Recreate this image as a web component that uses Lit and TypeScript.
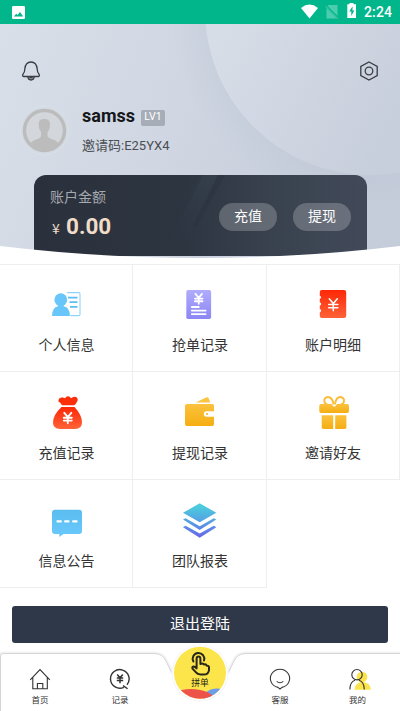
import { LitElement, html, svg, css } from "lit";
import { customElement } from "lit/decorators.js";

const yen = (x: number, y: number, s: number, w: number) => svg`
  <g transform="translate(${x} ${y}) scale(${s})" fill="none" stroke="#fff" stroke-width=${w / s} stroke-linecap="round">
    <path d="M-3.5-5 0-.8 3.5-5M0-.8V5.5M-4 0H4M-4 2.8H4" />
  </g>`;

const MENU = [
  {
    label: "个人信息",
    icon: svg`
      <path d="M18 6.6H29.5Q31 6.6 31 8V28.4Q31 29.6 29.5 29.6H21.5" fill="none" stroke="#8fd3f6" stroke-width="1.1"/>
      <path d="M19 11.7H28.5M20.5 16.2H28.5M21 20.8H28.5" stroke="#5cbdf0" stroke-width="1.7"/>
      <circle cx="11.8" cy="13.7" r="6.4" fill="#69c6fa"/>
      <path d="M3 30Q3 21.5 9 20.2L9 18H14.7V20.2Q21 21.5 21 30Z" fill="#69c6fa"/>`,
  },
  {
    label: "抢单记录",
    icon: svg`
      <rect x="4.3" y="4" width="24.8" height="29" rx="1.8" fill="url(#violet)"/>
      ${yen(16.7, 12.6, 0.95, 1.8)}
      <path d="M9.8 21H16.8M9.8 24.6H23.6M9.8 28.1H23.6" stroke="#fff" stroke-width="1.8" stroke-linecap="round"/>`,
  },
  {
    label: "账户明细",
    icon: svg`
      <path d="M7 4H29Q31.2 4 31.2 6.2V29.8Q31.2 32 29 32H7Q4.8 32 4.8 30V26.4Q6.2 25.6 6.2 24.7T4.8 23V19.8Q6.2 19 6.2 18T4.8 16.2V13Q6.2 12 6.2 11.2T4.8 9.7V6.2Q4.8 4 7 4Z" fill="url(#red)"/>
      ${yen(18.3, 18.5, 1.15, 1.5)}`,
  },
  {
    label: "充值记录",
    icon: svg`
      <path d="M13 11.2Q11.8 8.8 9.4 7.6Q9.2 4.2 12.4 3.6Q14.8 3.2 16 4.2Q17 2.3 19 2.3T22 4.2Q24.4 2 27 3Q29.4 4.4 28.5 6.8Q27 10.7 25 11.2Z" fill="#fd2f0b"/>
      <path d="M12.5 13H25.5Q33 21 33 28.5Q33 35 26 35H11Q4 35 4 28.5Q4 21 12.5 13Z" fill="url(#red)"/>
      ${yen(18.8, 23.8, 1, 1.9)}`,
  },
  {
    label: "提现记录",
    icon: svg`
      <path d="M13.7 8.6 24.6 3.3Q26 2.8 26.6 4L28.2 8.6Z" fill="#fbc540"/>
      <path d="M5 10H30.5Q32 10 32 11.8V17.3H24.5Q21.8 17.5 21.8 20T24.5 22.7H32V30.2Q32 32 30.2 32H5Q3 32 3 30.2V11.8Q3 10 5 10Z" fill="url(#gold)"/>
      <circle cx="25" cy="20" r="1.1" fill="#f9b826"/>`,
  },
  {
    label: "邀请好友",
    icon: svg`
      <g fill="none" stroke="#fabd35" stroke-width="1.9">
        <path d="M18.4 10.5Q17.5 2.8 12.6 3Q9 3.7 9.3 7.2Q9.5 10 12.5 10.5"/>
        <path d="M20 10.5Q20.9 2.8 25.6 3Q29.3 3.7 29 7.2Q28.8 10 26 10.5"/>
      </g>
      <path d="M6 10H16.5L18.4 12.5H20L22 10H32.3Q34 10 34 11.8V17Q34 19 32.3 19H6Q4.3 19 4.3 17V11.8Q4.3 10 6 10Z" fill="url(#gold)"/>
      <path d="M6.7 21.2H18.2V35H8.5Q6.7 35 6.7 33.2ZM20.2 21.2H31.4V33.2Q31.4 35 29.6 35H20.2Z" fill="url(#gold)"/>`,
  },
  {
    label: "信息公告",
    icon: svg`
      <path d="M6 7.8H30Q33 7.8 33 10.8V29Q33 32 30 32H14.5L10.3 35V32H6Q3 32 3 29V10.8Q3 7.8 6 7.8Z" fill="url(#sky)"/>
      <path d="M8.5 19.4H11.8M16.2 19.4H19.4M24.2 19.4H27.5" stroke="#fff" stroke-width="2.3" stroke-linecap="round"/>`,
  },
  {
    label: "团队报表",
    icon: svg`
      <g fill="url(#stack)">
        <path d="M17.7 1.3 34.3 10.8 17.7 20.3 1 10.8Z"/>
        <path d="M1 17.6 3.6 16.2 17.7 24.2 31.8 16.2 34.3 17.6 17.7 28Z"/>
        <path d="M1 25.2 3.6 23.8 17.7 31.6 31.8 23.8 34.3 25.2 17.7 35.7Z"/>
      </g>`,
  },
];

const TABS = [
  {
    label: "首页",
    cls: "",
    icon: svg`<path d="M1.2 11.8 11 1.6 20.8 11.8M3.8 9.5V20.8H18.3V9.5M8.4 20.8V15.5H13.8V20.8"/>`,
  },
  {
    label: "记录",
    cls: "",
    icon: svg`
      <path d="M14.8 19.3A9.3 9.3 0 1 1 18 16.8M14 17.6 18.6 20.8" stroke-width="1.4"/>
      <path d="M8.2 6.4 11 9.8 13.8 6.4M11 9.8V15.2M7.8 10.1H14.2M7.8 12.5H14.2" stroke-width="1.5"/>`,
  },
  {
    label: "客服",
    cls: "after-notch",
    icon: svg`
      <path d="M9 19.4A9.6 9.2 0 1 1 13 19.4L11 21Z"/>
      <path d="M7.7 13.4Q11 16 14.3 13.4"/>`,
  },
  {
    label: "我的",
    cls: "mine",
    icon: svg`
      <g fill="#fbe34d" stroke="none"><circle cx="13" cy="9" r="5.3"/><path d="M5.5 21.8Q6 14.5 13 14Q21.5 14 21.9 21.8Z"/></g>
      <circle cx="8" cy="6.7" r="5.2"/>
      <path d="M.9 21.4Q1 13.5 6 12.2M10 12.2Q15 13.5 15.3 21.4"/>`,
  },
];

@customElement("app-root")
export class AppRoot extends LitElement {
  static styles = css`
    :host {
      display: block;
      width: 400px;
      height: 711px;
      overflow: hidden;
      background: #fff;
      color: #333;
      font-family: Roboto, "Noto Sans CJK SC", sans-serif;
    }
    .page { display: flex; flex-direction: column; height: 711px; }
    .status {
      height: 24px; flex: none; background: #00b68a; color: #fff;
      display: flex; align-items: center; padding: 0 8px 0 12px; box-sizing: border-box;
      font-size: 14px; font-weight: 500;
    }
    .status .photo { margin-right: auto; }
    .status span { margin-left: 7px; letter-spacing: 0.1px; }
    .hero { position: relative; height: 240px; flex: none; }
    .backdrop, .curve { position: absolute; inset: 0; }
    .content { position: relative; display: flex; flex-direction: column; height: 232px; overflow: hidden; }
    .actions { display: flex; justify-content: space-between; padding: 36px 21px 0; }
    .profile { display: flex; align-items: flex-start; padding: 20px 0 0 20px; height: 93px; box-sizing: border-box; flex: none; }
    .who { margin-left: 13px; padding-top: 3px; }
    .name { display: flex; align-items: center; height: 20px; font-size: 18px; font-weight: 700; color: #15171b; }
    .level {
      margin: 5px 0 0 6px; width: 24px; height: 16px; border-radius: 2px; background: #a7adb7;
      color: #fff; font-size: 10.5px; font-weight: 400; line-height: 14px; text-align: center;
    }
    .code { margin-top: 11px; font-size: 13px; line-height: 20px; color: #4a4d53; }
    .account {
      position: relative; width: 333px; height: 81px; margin: 0 0 0 34px; flex: none;
      border-radius: 12px 12px 0 0; overflow: hidden;
    }
    .sheen { position: absolute; inset: 0; }
    .row { position: relative; display: flex; align-items: flex-start; padding: 12px 16px 0; }
    .sum { flex: 1; }
    .caption { font-size: 14px; line-height: 20px; color: #a5a8ad; }
    .amount { display: flex; align-items: baseline; margin-top: 6px; color: #f1dcc8; line-height: 26px; font-size: 22.5px; font-weight: 700; }
    .amount i { font: 400 14px/14px "Noto Sans CJK SC", sans-serif; width: 14px; padding-left: 2px; }
    .pill {
      width: 58px; height: 28px; border-radius: 14px; background: rgba(255, 255, 255, 0.22);
      color: #fff; font-size: 14px; line-height: 27px; text-align: center; margin: 16px 0 0 16px;
    }
    .menu {
      display: grid; grid-template-columns: 133px 134px 133px; grid-template-rows: 107px 108px 108px;
      border-top: 1px solid #eee; flex: none;
    }
    .cell {
      display: flex; flex-direction: column; align-items: center; justify-content: flex-end;
      box-sizing: border-box; border-right: 1px solid #eee; border-bottom: 1px solid #eee;
      padding: 0 0 15px 1px; font-size: 14px; line-height: 22px; color: #333;
    }
    .cell:nth-child(3n) { padding-left: 0; }
    .cell svg { margin: 0 0 12px; display: block; }
    .logout {
      flex: none; margin: 18px 12px 0; height: 37px; border-radius: 3px; background: #2f3848;
      color: #fff; font-size: 15px; line-height: 36px; text-align: center;
    }
    .tabs { position: relative; margin-top: auto; height: 66px; flex: none; display: grid; grid-template-columns: repeat(5, 80px); }
    .shell { position: absolute; left: 0; top: 0; }
    .tab {
      position: relative; display: flex; flex-direction: column; align-items: center; padding-top: 23px;
      font-size: 8.5px; line-height: 12px; color: #333;
    }
    .tab svg { fill: none; stroke: #333; stroke-width: 1.1; margin-bottom: 4px; }
    .after-notch { grid-column: 4; }
    .mine span { margin-right: 5px; }
    .join {
      position: absolute; left: 171px; top: -1px; width: 58px; height: 58px;
      font-size: 8.8px; font-weight: 400; color: #29261c; text-align: center;
    }
    .join svg { position: absolute; inset: 0; }
    .join span { position: relative; display: block; margin-top: 33px; line-height: 12px; }
    .defs { position: absolute; width: 0; height: 0; }
  `;

  render() {
    return html`
      <div class="page">
        <div class="status">
          <svg class="photo" width="13" height="13" viewBox="0 0 13 13">
            <rect width="13" height="13" rx="1.2" fill="#fff"/>
            <path d="M1.8 10.4 4.3 7.8 5.5 9 8 6 11.2 10.4Z" fill="#00b68a"/>
          </svg>
          <svg width="56" height="18" viewBox="0 0 56 18">
            <path d="M0 5Q8.5-1.8 17 5L8.5 15.5Z" fill="#fff"/>
            <path d="M27.5 2H36.5V15.5H25.5V4.5Z" fill="#4ccdaf"/>
            <path d="M24.5 2.5 37.5 15.5" stroke="#00b68a" stroke-width="2.4"/>
            <path d="M24.5 3 37 15.7" stroke="#4ccdaf" stroke-width="1"/>
            <path d="M46.3 1.3H48.5V0H52.5V1.3H55V15H46.3Z" fill="#fff"/>
            <path d="M51.6 3.2 48.3 8.6H50.3V13L53.4 7.5H51.4Z" fill="#00b68a"/>
          </svg>
          <span>2:24</span>
        </div>

        <div class="hero">
          <svg class="backdrop" width="400" height="240" viewBox="0 24 400 240">
            <defs>
              <linearGradient id="bg" x1="0" y1="0" x2="1" y2=".25">
                <stop offset="0" stop-color="#d8dfe9"/><stop offset=".5" stop-color="#d0d7e2"/><stop offset="1" stop-color="#c5ccda"/>
              </linearGradient>
              <linearGradient id="disc" gradientUnits="userSpaceOnUse" x1="210" y1="60" x2="380" y2="150">
                <stop offset="0" stop-color="#d6dde7"/><stop offset="1" stop-color="#c8cfdc"/>
              </linearGradient>
              <radialGradient id="halo" gradientUnits="userSpaceOnUse" cx="370" cy="10" r="200">
                <stop offset=".82" stop-color="#bcc5d5" stop-opacity=".35"/><stop offset="1" stop-color="#bcc5d5" stop-opacity="0"/>
              </radialGradient>
            </defs>
            <rect y="24" width="400" height="240" fill="url(#bg)"/>
            <circle cx="370" cy="10" r="200" fill="url(#halo)"/>
            <circle cx="370" cy="10" r="165" fill="url(#disc)"/>
          </svg>
          <div class="content">
            <div class="actions">
              <svg width="20" height="22" viewBox="0 0 20 22" fill="none" stroke="#3b3d42" stroke-width="1.3">
                <path d="M2.7 16.5H17.3Q19.2 16 17.8 13.8Q16.3 12.5 16.2 9Q15.5 2 10 2T3.8 9Q3.7 12.5 2.2 13.8Q.8 16 2.7 16.5ZM6.8 17Q7.2 20 10 20T13.2 17M8.3 17.8H11.7"/>
              </svg>
              <svg width="20" height="22" viewBox="0 0 20 22" fill="none" stroke="#3b3d42" stroke-width="1.3">
                <path d="M10 2 18.2 6.5V15.5L10 20 1.8 15.5V6.5Z"/><circle cx="10" cy="11" r="3.8"/>
              </svg>
            </div>
            <div class="profile">
              <svg width="49" height="58" viewBox="0 0 49 58">
                <circle cx="24.5" cy="28.5" r="24" fill="#d3d9e1" stroke="#dde2e9" stroke-width=".7"/>
                <circle cx="24.5" cy="28.5" r="20" fill="#d3d7dc" stroke="#bcbcbd" stroke-width="3.4"/>
                <path d="M18.7 22Q18.5 17 24.3 17T30 22Q30 27.5 27.6 29.8V34Q28 36 32 37.2Q37 38.6 38.5 41.5Q33 49 24.5 49T10.2 41.5Q12 38.6 17 37.2Q20.8 36 21.1 34V29.8Q18.8 27.5 18.7 22Z" fill="#bcbcbd"/>
              </svg>
              <div class="who">
                <div class="name">samss<div class="level">LV1</div></div>
                <div class="code">邀请码:E25YX4</div>
              </div>
            </div>
            <div class="account">
              <svg class="sheen" width="333" height="81" viewBox="0 0 333 81">
                <defs>
                  <linearGradient id="card"><stop offset="0" stop-color="#2a313d"/><stop offset=".45" stop-color="#2d3541"/><stop offset=".7" stop-color="#38414d"/><stop offset="1" stop-color="#424a5a"/></linearGradient>
                  <linearGradient id="fade" x2="0" y2="1"><stop offset="0" stop-color="#3b4655"/><stop offset="1" stop-color="#303946" stop-opacity="0"/></linearGradient>
                </defs>
                <rect width="333" height="81" fill="url(#card)"/>
                <path d="M169 0H184L151 72 133 72Z" fill="url(#fade)" opacity=".4"/>
                <path d="M184 0H191L162 52 158 52Z" fill="#2b323f" opacity=".5"/>
              </svg>
              <div class="row">
                <div class="sum">
                  <div class="caption">账户金额</div>
                  <div class="amount"><i>¥</i>0.00</div>
                </div>
                <div class="pill">充值</div>
                <div class="pill">提现</div>
              </div>
            </div>
          </div>
          <svg class="curve" width="400" height="240" viewBox="0 24 400 240">
            <path d="M0 246Q200 270 400 246V264H0Z" fill="#fff"/>
          </svg>
        </div>

        <svg class="defs">
          <defs>
            <linearGradient id="violet" x2="0" y2="1"><stop offset="0" stop-color="#b0acfb"/><stop offset="1" stop-color="#8c86f5"/></linearGradient>
            <linearGradient id="red" x2="0" y2="1"><stop offset="0" stop-color="#fd2706"/><stop offset="1" stop-color="#ff6338"/></linearGradient>
            <linearGradient id="gold" x2="0" y2="1"><stop offset="0" stop-color="#fbc23d"/><stop offset="1" stop-color="#f5ae12"/></linearGradient>
            <linearGradient id="sky" x2="0" y2="1"><stop offset="0" stop-color="#5bbcf0"/><stop offset="1" stop-color="#6acafc"/></linearGradient>
            <linearGradient id="stack" gradientUnits="userSpaceOnUse" x1="0" y1="0" x2="0" y2="36"><stop offset="0" stop-color="#49d8dc"/><stop offset=".55" stop-color="#559fe4"/><stop offset="1" stop-color="#6a62e8"/></linearGradient>
          </defs>
        </svg>
        <div class="menu">
          ${MENU.map(
            (m) => html`<div class="cell">
              <svg width="36" height="36" viewBox="0 0 36 36">${m.icon}</svg>
              ${m.label}
            </div>`
          )}
        </div>

        <div class="logout">退出登陆</div>

        <div class="tabs">
          <svg class="shell" width="400" height="66" viewBox="0 645 400 66">
            <path d="M.5 720V656Q.5 653.5 3 653.5H154Q163 653.5 166 661L172 673M228 673L234 661Q237 653.5 246 653.5H400" fill="none" stroke="#f4f4f4" stroke-width="4"/>
            <path d="M.5 720V656Q.5 653.5 3 653.5H154Q163 653.5 166 661C171 675 180 701 200 701S229 675 234 661Q237 653.5 246 653.5H402V720Z" fill="#fff"/>
            <path d="M.5 720V656Q.5 653.5 3 653.5H154Q163 653.5 166 661L172 673M228 673L234 661Q237 653.5 246 653.5H400" fill="none" stroke="#d0d0d0" stroke-width=".9"/>
          </svg>
          ${TABS.map(
            (t) => html`<div class="tab ${t.cls}">
              <svg width="22" height="22" viewBox="0 0 22 22">${t.icon}</svg>
              <span>${t.label}</span>
            </div>`
          )}
          <div class="join">
            <svg width="58" height="58" viewBox="0 0 58 58">
              <defs><clipPath id="ball"><circle cx="29" cy="28.7" r="26"/></clipPath></defs>
              <circle cx="29" cy="29" r="28.5" fill="#f7f7f7"/>
              <circle cx="29" cy="28.7" r="27.3" fill="#fff"/>
              <g clip-path="url(#ball)">
                <rect width="58" height="58" fill="#fbe54a"/>
                <ellipse cx="46" cy="55" rx="14" ry="10.5" fill="#6d9ce8"/>
                <ellipse cx="20" cy="57" rx="24" ry="12" fill="#ed5349"/>
              </g>
              <g fill="none" stroke="#29261c" stroke-width="2" stroke-linecap="round" stroke-linejoin="round">
                <path d="M22.4 17.5A5.8 5.8 0 1 1 33 16.5"/>
                <path d="M25.6 23.5V14.5Q25.8 12.6 27.5 12.6T29.4 14.5V20Q32 18.8 33 20.6Q35.2 19.8 35.8 21.7Q38 21.4 38 23.4V26Q37.6 30.6 32.5 30.6H29.5Q26.5 30.4 25 28.4L21.5 24.6Q20.8 23 22.5 22.5Q24 22.3 25.6 24.4"/>
              </g>
            </svg>
            <span>拼单</span>
          </div>
        </div>
      </div>
    `;
  }
}
